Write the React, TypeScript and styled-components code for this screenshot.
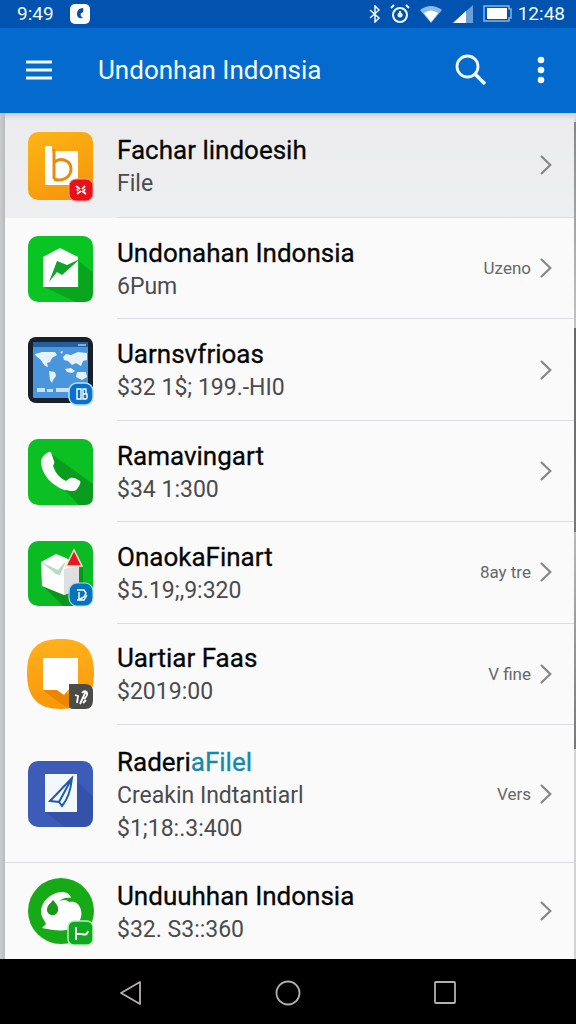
import React from "react";
import styled, { createGlobalStyle } from "styled-components";

const GlobalStyle = createGlobalStyle`
  * { box-sizing: border-box; }
  body { margin: 0; background: #000; font-family: Roboto, "Liberation Sans", sans-serif; }
  svg { display: block; flex: none; }
`;

const Screen = styled.div`
  display: flex;
  flex-direction: column;
  min-height: 100vh;
`;

const StatusBar = styled.div`
  display: flex;
  align-items: center;
  height: 28px;
  padding: 0 11px 0 17px;
  background: #0252b0;
  color: #f2fbff;
  font-size: 19px;
  line-height: 28px;
`;

const StatusLeft = styled.div`
  display: flex;
  align-items: center;
  gap: 16px;
  flex: 1;
`;

const StatusRight = styled.div`
  display: flex;
  align-items: center;
  gap: 6px;
`;

const StatusIconRow = styled.div`
  display: flex;
  align-items: center;
  gap: 9px;
`;

const AppBar = styled.header`
  display: flex;
  align-items: center;
  height: 85px;
  padding: 0 17px 2px 21px;
  background: #056ace;
  color: #f4fcff;
`;

const BarButton = styled.button`
  display: flex;
  align-items: center;
  justify-content: center;
  width: 36px;
  height: 48px;
  padding: 0;
  border: 0;
  background: none;
  color: inherit;
  cursor: pointer;
`;

const BarTitle = styled.h1`
  flex: 1;
  margin: 0 0 0 41px;
  font-size: 26px;
  font-weight: 400;
  line-height: 34px;
`;

const BarActions = styled.div`
  display: flex;
  gap: 34px;
`;

const Content = styled.main`
  display: flex;
  flex: 1;
  padding: 0 2px 0 5px;
  background:
    linear-gradient(#d8d9da 0 9px, #858687 9px, #c4c4c5 215px, #66686a 215px, #77787a 419px, #b8b9ba 419px, #77777a 636px, #d2d3d5 636px) right / 2px 100% no-repeat,
    linear-gradient(90deg, #cbcccd, #b9bbbd) left / 5px 100% no-repeat,
    #fafafa;
`;

const List = styled.ul`
  display: flex;
  flex: 1;
  flex-direction: column;
  margin: 0;
  padding: 0;
  list-style: none;
  background: #fafafa;
`;

const Item = styled.li<{ $size: number; $grow?: boolean; $active?: boolean }>`
  display: flex;
  flex: ${(p) => (p.$grow ? 1 : 0)} 0 ${(p) => p.$size}px;
  background: ${(p) => (p.$active ? "linear-gradient(#cfd0d2, #ececee 7px, #eeeff0)" : "none")};
`;

const ItemLink = styled.a<{ $fullRule?: boolean }>`
  display: flex;
  flex: 1;
  align-items: center;
  padding-left: 22px;
  color: #060606;
  text-decoration: none;
  border-bottom: ${(p) => (p.$fullRule ? "1px solid #dcdde0" : "0")};
`;

const ItemBody = styled.div<{ $rule?: boolean }>`
  display: flex;
  flex: 1;
  align-items: center;
  align-self: stretch;
  margin-left: 22px;
  padding-right: 22px;
  border-bottom: ${(p) => (p.$rule ? "1px solid #dcdde0" : "0")};
`;

const ItemText = styled.div`
  flex: 1;
  padding-top: 2px;
`;

const ItemTitle = styled.div`
  font-size: 26px;
  line-height: 34px;
  -webkit-text-stroke: 0.3px currentColor;
`;

const Accent = styled.span`
  color: #1489ac;
`;

const ItemLine = styled.div`
  color: #4a4b4d;
  font-size: 23px;
  line-height: 33px;
`;

const ItemNote = styled.span`
  margin-right: 9px;
  color: #666769;
  font-size: 17px;
  line-height: 24px;
`;

const NavBar = styled.nav`
  display: flex;
  align-items: center;
  justify-content: center;
  gap: 121px;
  height: 65px;
  padding: 3px 0 0;
  background: #000;
  color: #b5b0ad;
`;

const Chevron = () => (
  <svg width="12" height="20" viewBox="0 0 12 20" fill="none" stroke="#858687" strokeWidth="2.2">
    <path d="M1 1l9.3 9L1 19" />
  </svg>
);

const TileArt = styled.svg.attrs({ width: 68, height: 72, viewBox: "0 0 68 72", "aria-hidden": true })``;

const BooksIcon = () => (
  <TileArt>
    <defs>
      <linearGradient id="books" x2="0.5" y2="1">
        <stop stopColor="#fdb515" />
        <stop offset="1" stopColor="#f6990c" />
      </linearGradient>
    </defs>
    <rect x="1" y="2" width="65" height="68" rx="10" fill="url(#books)" />
    <path d="M18 16h7v5h26v34H18z" fill="#fff" />
    <path d="M27 19v30M27 33c4-6 17-4 17 6 0 9-10 13-17 10" fill="none" stroke="#e98a0a" strokeWidth="3" />
    <rect x="42" y="49" width="24" height="22" rx="7" fill="#e8111b" stroke="#f7a08a" strokeWidth="1" />
    <path d="M49 56l4 3M58 56l-3 3M50 64l4-3M59 64l-4-3M50 59l1 2M58 59l-1 2" fill="none" stroke="#fff" strokeWidth="1.8" />
  </TileArt>
);

const HomeChartIcon = () => (
  <TileArt>
    <rect x="1" y="3" width="65" height="66" rx="10" fill="#09c423" />
    <path d="M52 28l14 12v20q0 9-9 9h-8L17 54h35z" fill="#0aa51e" />
    <path d="M16 24L33 15l18 9v30H16z" fill="#fff" />
    <path d="M22 49l8-21 10 4 13-6-18 16-5-3z" fill="#0fa52a" />
  </TileArt>
);

const MapIcon = () => (
  <TileArt>
    <rect x="1" y="3" width="65" height="66" rx="8" fill="#17202b" />
    <rect x="6" y="8" width="55" height="56" rx="1" fill="#4996dd" />
    <path d="M6 8h55v5H6z" fill="#235f9e" />
    <path d="M51 10h8v2h-8z" fill="#7ab0dd" />
    <path d="M8 20l7-2 13 0 2 3-5 3-2 4-3 1 1 4-3-1-5-7-4-3zM22 37l6 1 1 4-3 4-1 3-2-3zM36 23l3-3 5 1 7-3 9 1v7l-4 1-2 5-5-3-4 2-4-4-4-1zM38 35l6-1 4 3-3 2-5-1zM50 38l9 0 1 5-5 3-6-3zM33 18l3-1-1 3z" fill="#e6f2fa" />
    <path d="M10 54h8v4h-8zM20 55h6v3h-6zM29 54h13v4H29z" fill="#c8e2f7" />
    <rect x="42" y="49" width="24" height="22" rx="8" fill="#0870cd" stroke="#b9defb" strokeWidth="1.5" />
    <path d="M50 55h4v10h-4zM56 55h3v4l1 1v4l-1 1h-3zM56 60h4" fill="none" stroke="#fff" strokeWidth="1.4" />
  </TileArt>
);

const PhoneIcon = () => (
  <TileArt>
    <rect x="1" y="3" width="65" height="66" rx="10" fill="#0bc023" />
    <path d="M23 17l43 31v13q0 8-8 8h-6L34 50z" fill="#0a9c1c" />
    <path d="M22 16c2-1 3 3 5 9 1 3-1 4-1 5 2 7 7 12 13 15l4-3c3-1 6 0 10 3 1 1 0 4-3 8-2 3-6 2-12 1C25 50 14 38 14 25c1-5 5-8 8-9z" fill="#fff" />
  </TileArt>
);

const BoxIcon = () => (
  <TileArt>
    <rect x="1" y="4" width="65" height="65" rx="10" fill="#0bbb23" />
    <path d="M15 48l21 21h20V30z" fill="#09961b" />
    <path d="M14 25l15-8 10 4 13 8v23l-15 6-22-9z" fill="#fff" />
    <path d="M37 32l15-3v23l-15 6z" fill="#dedfe1" />
    <path d="M14 25l17 8 8-9-6 14-4-1z" fill="#b8dcbc" />
    <path d="M47 13l8 16H39z" fill="#e21c25" stroke="#f8dec9" strokeWidth="1.5" />
    <rect x="42" y="46" width="24" height="23" rx="8" fill="#0873bd" stroke="#a9dcf2" strokeWidth="1.2" />
    <path d="M50 53h7l2 3-2 4-6 3M52 55v7M50 63h7l3-5" fill="none" stroke="#fff" strokeWidth="1.4" />
  </TileArt>
);

const ChatIcon = () => (
  <TileArt>
    <defs>
      <linearGradient id="chat" x2="0" y2="1">
        <stop stopColor="#ffb11c" />
        <stop offset="1" stopColor="#fa960a" />
      </linearGradient>
    </defs>
    <path d="M34 1c23 0 33 10 33 34S57 71 34 71 0 60 0 35 11 1 34 1z" fill="url(#chat)" />
    <path d="M16 52l18 0 8 5v13l-8-4z" fill="#eb8605" />
    <path d="M16 20h35v32H41l-4 5-7-5H16z" fill="#fff" />
    <path d="M42 46h16q8 0 8 8v8q0 9-8 9H46q-4 0-4-4z" fill="#4b4c48" />
    <path d="M48 57l3 1-1 7M59 53l-6 13M55 55c4-5 8 1 2 6M56 65l3-3" fill="none" stroke="#fff" strokeWidth="1.8" />
  </TileArt>
);

const SailIcon = () => (
  <TileArt>
    <rect x="1" y="3" width="65" height="66" rx="10" fill="#3d5cb7" />
    <path d="M18 54l33-30 15 15v20q0 10-10 10H38z" fill="#3452a9" />
    <path d="M18 16h32v38H18z" fill="#f3f8ff" />
    <path d="M45 20L23 43l9 1 3 4q8-9 10-28zM45 20L32 44" fill="none" stroke="#1f5ba8" strokeWidth="2" />
  </TileArt>
);

const MaskIcon = () => (
  <TileArt>
    <circle cx="34" cy="36" r="33" fill="#16aa17" />
    <path d="M44 23c-1-7-12-8-19-3-10 5-14 17-8 25l2 4-4 4c11 2 19 4 27 1 9-2 14-11 12-19-2-7-6-9-12-8-3-3-8-2-11 0 4-4 9-5 13-4z" fill="#fff" />
    <path d="M26 25c4 4 7 9 4 13-4 5-10 1-10-3 0-5 4-7 6-10z" fill="#169a18" />
    <rect x="41" y="46" width="25" height="24" rx="6" fill="#11a821" stroke="#b9efba" strokeWidth="1.5" />
    <path d="M49 52v13M49 59h6q5 2 6-3" fill="none" stroke="#fff" strokeWidth="2" />
  </TileArt>
);

interface Entry {
  title: React.ReactNode;
  lines: string[];
  note?: string;
  Icon: React.FC;
  size: number;
  active?: boolean;
  rule?: "inset" | "full";
}

const entries: Entry[] = [
  { title: "Fachar lindoesih", lines: ["File"], Icon: BooksIcon, size: 105, active: true, rule: "inset" },
  { title: "Undonahan Indonsia", lines: ["6Pum"], note: "Uzeno", Icon: HomeChartIcon, size: 101, rule: "inset" },
  { title: "Uarnsvfrioas", lines: ["$32 1$; 199.-HI0"], Icon: MapIcon, size: 101, rule: "inset" },
  { title: "Ramavingart", lines: ["$34 1:300"], Icon: PhoneIcon, size: 101, rule: "inset" },
  { title: "OnaokaFinart", lines: ["$5.19;,9:320"], note: "8ay tre", Icon: BoxIcon, size: 101, rule: "inset" },
  { title: "Uartiar Faas", lines: ["$2019:00"], note: "V fine", Icon: ChatIcon, size: 101, rule: "inset" },
  {
    title: <>Raderi<Accent>aFilel</Accent></>,
    lines: ["Creakin Indtantiarl", "$1;18:.3:400"],
    note: "Vers",
    Icon: SailIcon,
    size: 138,
    rule: "full",
  },
  { title: "Unduuhhan Indonsia", lines: ["$32. S3::360"], Icon: MaskIcon, size: 96 },
];

const StatusIcons = () => (
  <StatusIconRow>
    <svg width="12" height="18" viewBox="0 0 12 18" fill="none" stroke="currentColor" strokeWidth="1.5">
      <path d="M1 5l9 8-4 4V1l4 4-9 8" />
    </svg>
    <svg width="20" height="20" viewBox="0 0 20 20" fill="none" stroke="currentColor" strokeWidth="2">
      <circle cx="10" cy="11" r="7" />
      <path d="M1 4l3-3M19 4l-3-3M10 7v4l2 1" />
      <circle cx="10" cy="11" r="1.5" fill="currentColor" />
    </svg>
    <svg width="24" height="18" viewBox="0 0 24 18">
      <path d="M1 5Q12-3 23 5L12 18z" fill="#8ebbe6" />
      <path d="M5 8q7-5 14 0l-7 9z" fill="#fff" />
    </svg>
    <svg width="22" height="18" viewBox="0 0 22 18">
      <path d="M21 0v18H1z" fill="#6b9fd6" />
      <path d="M14 6v12H1z" fill="#fff" />
    </svg>
    <svg width="29" height="18" viewBox="0 0 29 18">
      <path d="M1 1h25v3h2v9h-2v3H1z" fill="none" stroke="#83b6e6" strokeWidth="1.5" />
      <path d="M4 3h20v11H4z" fill="#fff" />
    </svg>
  </StatusIconRow>
);

export default function App() {
  return (
    <Screen>
      <GlobalStyle />
      <StatusBar>
        <StatusLeft>
          <span>9:49</span>
          <svg width="20" height="20" viewBox="0 0 20 20">
            <rect width="20" height="20" rx="5" fill="#fff" />
            <path d="M13 4c-5 0-6 4-6 6 0 4 3 5 6 4-2-1-3-3-2-5 2 0 3-2 2-5z" fill="#0b4f9d" />
          </svg>
        </StatusLeft>
        <StatusRight>
          <StatusIcons />
          <span>12:48</span>
        </StatusRight>
      </StatusBar>
      <AppBar>
        <BarButton aria-label="Menu">
          <svg width="26" height="22" viewBox="0 0 26 22" stroke="currentColor" strokeWidth="3">
            <path d="M0 3h26M0 11h26M0 19h26" />
          </svg>
        </BarButton>
        <BarTitle>Undonhan Indonsia</BarTitle>
        <BarActions>
          <BarButton aria-label="Search">
            <svg width="32" height="32" viewBox="0 0 32 32" fill="none" stroke="currentColor" strokeWidth="2.8">
              <circle cx="12.5" cy="12.5" r="10.5" />
              <path d="M20 20l10 10" strokeWidth="3.6" />
            </svg>
          </BarButton>
          <BarButton aria-label="More options">
            <svg width="8" height="28" viewBox="0 0 8 28" fill="currentColor">
              <circle cx="4" cy="4" r="3.3" />
              <circle cx="4" cy="14" r="3.3" />
              <circle cx="4" cy="24" r="3.3" />
            </svg>
          </BarButton>
        </BarActions>
      </AppBar>
      <Content>
        <List>
          {entries.map(({ title, lines, note, Icon, size, active, rule }, i) => (
            <Item key={i} $size={size} $grow={size === 101} $active={active}>
              <ItemLink href="#" $fullRule={rule === "full"}>
                <Icon />
                <ItemBody $rule={rule === "inset"}>
                  <ItemText>
                    <ItemTitle>{title}</ItemTitle>
                    {lines.map((line) => (
                      <ItemLine key={line}>{line}</ItemLine>
                    ))}
                  </ItemText>
                  {note && <ItemNote>{note}</ItemNote>}
                  <Chevron />
                </ItemBody>
              </ItemLink>
            </Item>
          ))}
        </List>
      </Content>
      <NavBar>
        <BarButton aria-label="Back">
          <svg width="22" height="26" viewBox="0 0 22 26" fill="none" stroke="currentColor" strokeWidth="1.8" strokeLinejoin="round">
            <path d="M20 2v22L1 13z" />
          </svg>
        </BarButton>
        <BarButton aria-label="Home">
          <svg width="26" height="26" viewBox="0 0 26 26" fill="none" stroke="currentColor" strokeWidth="1.8">
            <circle cx="13" cy="13" r="11.5" />
          </svg>
        </BarButton>
        <BarButton aria-label="Recent apps">
          <svg width="22" height="24" viewBox="0 0 22 24" fill="none" stroke="currentColor" strokeWidth="1.8">
            <rect x="1" y="1" width="20" height="21" rx="1" />
          </svg>
        </BarButton>
      </NavBar>
    </Screen>
  );
}
